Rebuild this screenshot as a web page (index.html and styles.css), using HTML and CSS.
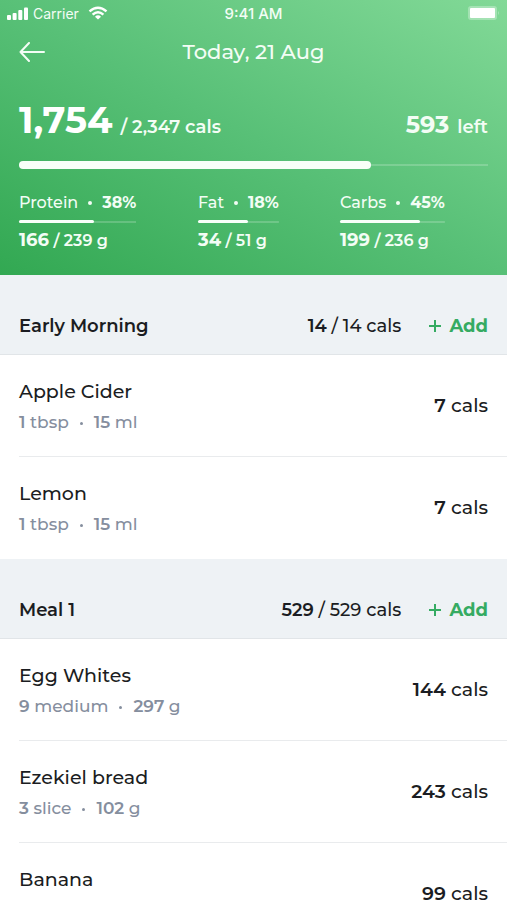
FILE: index.html
```html
<!DOCTYPE html>
<html lang="en">
<head>
<meta charset="utf-8">
<meta name="viewport" content="width=device-width, initial-scale=1">
<title>Today, 21 Aug</title>
<link rel="stylesheet" href="styles.css">
</head>
<body>
<header class="summary">
  <div class="status">
    <div class="status-left">
      <svg class="signal" viewBox="0 0 21 13" width="21" height="13" aria-hidden="true"><rect x="0" y="8" width="4" height="5" rx="1"/><rect x="5.600" y="6" width="4" height="7" rx="1"/><rect x="11.300" y="3" width="4" height="10" rx="1"/><rect x="17" y="0.500" width="4" height="12.500" rx="1"/></svg>
      <span>Carrier</span>
      <svg class="wifi" viewBox="0 0 20 14" width="20" height="14" aria-hidden="true"><path d="M1.500 5.300Q10-2 18.500 5.300M4.600 8.600Q10 3.800 15.400 8.600"/><path class="wifi-dot" d="M7 10.700Q10 8 13 10.700L10 13.500Z"/></svg>
    </div>
    <span class="time">9:41 AM</span>
    <svg class="battery" viewBox="0 0 32 14" width="32" height="14" aria-hidden="true"><rect class="battery-case" x="0" y="0" width="29" height="14" rx="3"/><rect x="2" y="2" width="25" height="10" rx="1"/><path class="battery-tip" d="M30 5Q32 7 30 9Z"/></svg>
  </div>
  <nav class="nav">
    <a class="back" href="#" aria-label="Back"><svg viewBox="0 0 26 20" width="26" height="20" aria-hidden="true"><path d="M25 10H1.500M10 1 1.500 10 10 19"/></svg></a>
    <h1 class="title">Today, 21 Aug</h1>
  </nav>
  <div class="totals">
    <div><strong class="eaten">1,754</strong><span class="goal">/ 2,347 cals</span></div>
    <div><strong class="left">593</strong><span class="goal">left</span></div>
  </div>
  <div class="bar bar-main" role="progressbar" aria-label="Calories" aria-valuenow="75"><div class="fill" style="width:75%"></div></div>
  <div class="macros">
    <section class="macro">
      <div class="macro-name">Protein<i class="dot"></i><b>38%</b></div>
      <div class="bar" role="progressbar" aria-label="Protein" aria-valuenow="64"><div class="fill" style="width:64%"></div></div>
      <div class="macro-value"><b>166</b> / 239 g</div>
    </section>
    <section class="macro">
      <div class="macro-name">Fat<i class="dot"></i><b>18%</b></div>
      <div class="bar" role="progressbar" aria-label="Fat" aria-valuenow="62"><div class="fill" style="width:62%"></div></div>
      <div class="macro-value"><b>34</b> / 51 g</div>
    </section>
    <section class="macro">
      <div class="macro-name">Carbs<i class="dot"></i><b>45%</b></div>
      <div class="bar" role="progressbar" aria-label="Carbs" aria-valuenow="76"><div class="fill" style="width:76%"></div></div>
      <div class="macro-value"><b>199</b> / 236 g</div>
    </section>
  </div>
</header>
<main>
  <section class="meal">
    <div class="meal-head">
      <h2 class="meal-name">Early Morning</h2>
      <span class="meal-cals"><b>14</b> / 14 cals</span>
      <button class="add" type="button"><svg viewBox="0 0 12 12" width="12" height="12" aria-hidden="true"><path d="M6 0V12M0 6H12"/></svg>Add</button>
    </div>
    <ul class="foods">
      <li class="food"><div><h3 class="food-name">Apple Cider</h3><p class="portion"><b>1</b> tbsp<i class="dot"></i><b>15</b> ml</p></div><span class="cals"><b>7</b> cals</span></li>
      <li class="food"><div><h3 class="food-name">Lemon</h3><p class="portion"><b>1</b> tbsp<i class="dot"></i><b>15</b> ml</p></div><span class="cals"><b>7</b> cals</span></li>
    </ul>
  </section>
  <section class="meal">
    <div class="meal-head">
      <h2 class="meal-name">Meal 1</h2>
      <span class="meal-cals"><b>529</b> / 529 cals</span>
      <button class="add" type="button"><svg viewBox="0 0 12 12" width="12" height="12" aria-hidden="true"><path d="M6 0V12M0 6H12"/></svg>Add</button>
    </div>
    <ul class="foods">
      <li class="food"><div><h3 class="food-name">Egg Whites</h3><p class="portion"><b>9</b> medium<i class="dot"></i><b>297</b> g</p></div><span class="cals"><b>144</b> cals</span></li>
      <li class="food"><div><h3 class="food-name">Ezekiel bread</h3><p class="portion"><b>3</b> slice<i class="dot"></i><b>102</b> g</p></div><span class="cals"><b>243</b> cals</span></li>
      <li class="food"><div><h3 class="food-name">Banana</h3><p class="portion"></p></div><span class="cals"><b>99</b> cals</span></li>
    </ul>
  </section>
</main>
</body>
</html>
```
FILE: styles.css
```css
* { box-sizing: border-box; }
body {
  margin: 0;
  background: #fff;
  color: #1b1d22;
  font-family: Montserrat, Inter, sans-serif;
  font-size: 18px;
  font-weight: 500;
}
h1, h2, h3, p, ul { margin: 0; padding: 0; font-weight: inherit; }
b { font-weight: 700; }
svg { display: block; }

.summary {
  padding: 0 19px 21px;
  color: #f3fdf5;
  background: linear-gradient(28deg, #32a852 0%, #58c077 50%, #82d997 100%);
}
.status {
  display: grid;
  grid-template-columns: 1fr auto 1fr;
  align-items: center;
  height: 26px;
  margin: 0 -12px;
  font-family: Inter, sans-serif;
  font-size: 14px;
  font-weight: 400;
}
.status-left { display: flex; align-items: center; gap: 5px; }
.signal, .battery { fill: #fff; }
.wifi { margin-left: 4px; fill: none; stroke: #fff; stroke-width: 2.400; }
.wifi-dot { fill: #fff; stroke: none; }
.time { font-weight: 500; font-size: 15px; }
.battery { justify-self: end; }
.battery-case, .battery-tip { fill: #fff; opacity: .3; }

.nav {
  display: grid;
  grid-template-columns: 1fr auto 1fr;
  align-items: center;
  height: 52px;
}
.back svg { fill: none; stroke: #f3fdf5; stroke-width: 2; stroke-linecap: round; stroke-linejoin: round; }
.title { font-size: 21px; line-height: 24px; font-weight: 500; }

.totals {
  display: flex;
  justify-content: space-between;
  align-items: baseline;
  margin-top: 20px;
  line-height: 44px;
}
.eaten { font-size: 37px; font-weight: 700; color: #fff; }
.left { font-size: 24px; font-weight: 700; }
.goal { margin-left: 8px; font-weight: 600; font-size: 18px; }

.bar {
  display: flex;
  align-items: center;
  height: 3px;
  background: linear-gradient(#ffffff30, #ffffff30) center / 100% 2px no-repeat;
}
.fill { height: 100%; border-radius: 4px; background: #f8fff9; }
.bar-main { height: 8px; margin-top: 12px; }
.macros {
  display: grid;
  grid-template-columns: 179fr 142fr 148fr;
  margin-top: 22px;
}
.macro { width: fit-content; font-size: 16px; }
.macro-name { display: flex; align-items: center; line-height: 24px; margin-bottom: 5px; }
.macro-value { margin-top: 4px; line-height: 26px; font-weight: 600; }
.macro-value b { font-size: 18px; }
.dot {
  display: inline-block;
  width: 4px;
  height: 4px;
  margin: 0 10px;
  border-radius: 50%;
  background: currentColor;
  vertical-align: middle;
}

.meal-head {
  display: flex;
  align-items: center;
  padding: 37px 19px 14px;
  line-height: 28px;
  background: #eef2f5;
  border-bottom: 1px solid #e1e5e8;
}
.meal-name { flex: 1; font-size: 18px; font-weight: 600; }
.meal-cals b { font-weight: 600; }
.add {
  display: flex;
  align-items: center;
  gap: 8px;
  margin-left: 28px;
  padding: 0;
  border: 0;
  background: none;
  color: #35ab62;
  font: inherit;
  font-weight: 700;
}
.add svg { stroke: currentColor; stroke-width: 2; }
.foods { list-style: none; }
.food {
  display: flex;
  justify-content: space-between;
  align-items: center;
  min-height: 102px;
  margin-left: 19px;
  padding-right: 19px;
  border-bottom: 1px solid #e9ebed;
}
.food:last-child { border-color: transparent; }
.food-name { font-size: 19px; line-height: 32px; }
.portion { min-height: 28px; font-size: 17px; line-height: 28px; color: #858e9e; }
.portion b { font-weight: 600; }
.portion .dot { width: 3px; height: 3px; margin: 0 11px; }
.cals { font-size: 19px; }
.cals b { font-weight: 600; }
```
